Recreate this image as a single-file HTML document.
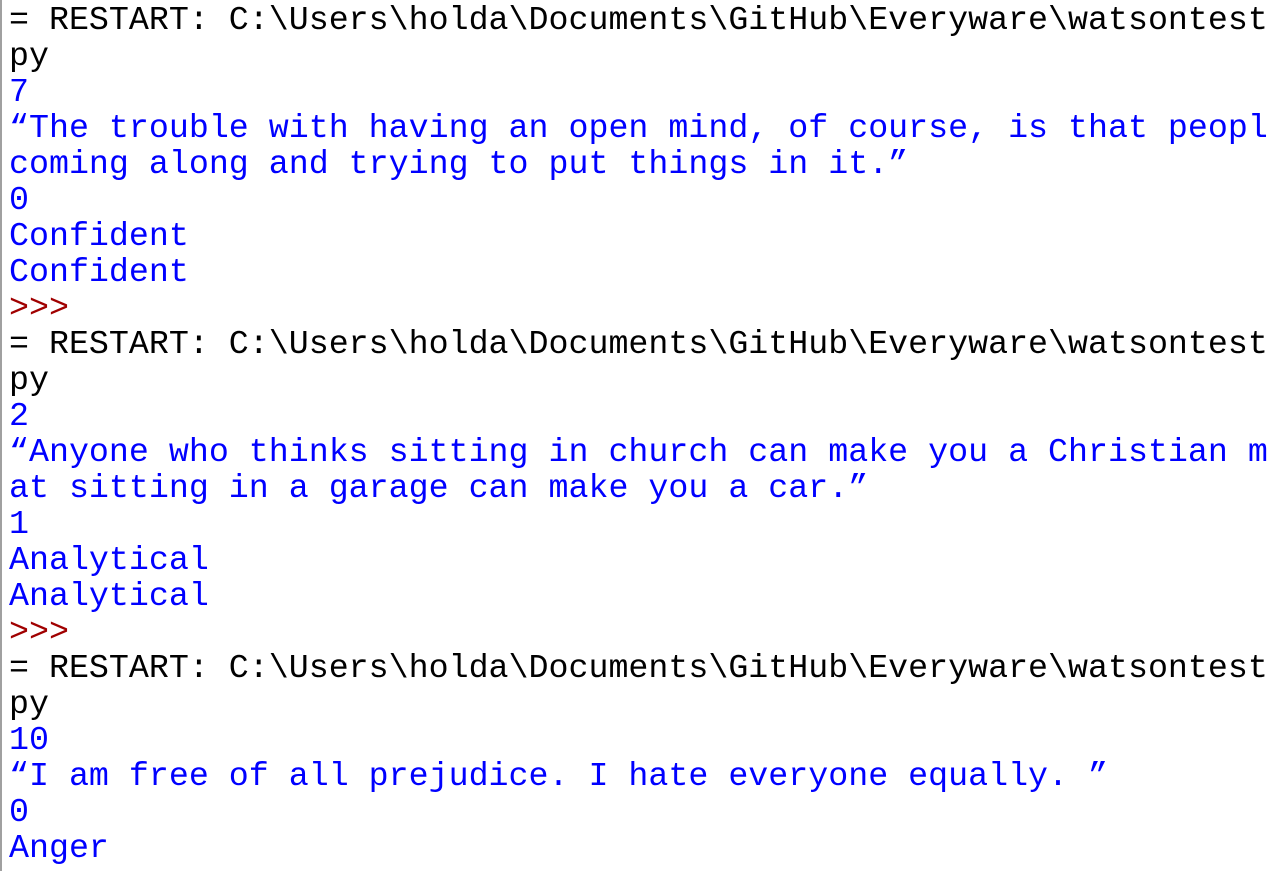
<!DOCTYPE html>
<html><head><meta charset="utf-8"><style>
html,body{margin:0;padding:0;background:#fff;width:1269px;height:871px;overflow:hidden}
.b{position:absolute;left:0;top:0;width:2px;height:871px;background:#a0a0a0}
pre{margin:0;position:absolute;left:9px;top:2px;font-family:"Liberation Mono",monospace;font-size:33.3px;line-height:36px;white-space:pre;color:#000}
.u{color:#0000ff}.r{color:#a00000}
</style></head><body><div class="b"></div><pre>= RESTART: C:\Users\holda\Documents\GitHub\Everyware\watsontest
py
<span class="u">7
“The trouble with having an open mind, of course, is that peopl
coming along and trying to put things in it.”
0
Confident
Confident</span>
<span class="r">&gt;&gt;&gt;</span>
= RESTART: C:\Users\holda\Documents\GitHub\Everyware\watsontest
py
<span class="u">2
“Anyone who thinks sitting in church can make you a Christian m
at sitting in a garage can make you a car.”
1
Analytical
Analytical</span>
<span class="r">&gt;&gt;&gt;</span>
= RESTART: C:\Users\holda\Documents\GitHub\Everyware\watsontest
py
<span class="u">10
“I am free of all prejudice. I hate everyone equally. ”
0
Anger</span></pre></body></html>
